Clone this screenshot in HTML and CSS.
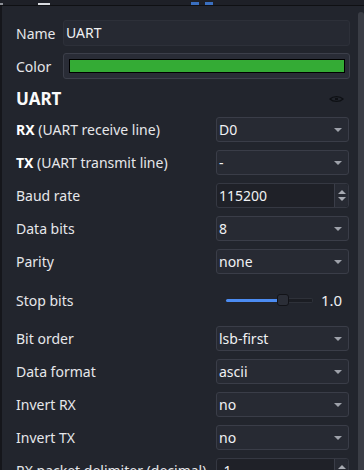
FILE: index.html
```html
<!DOCTYPE html>
<html lang="en">
<head>
  <meta charset="UTF-8" />
  <title>UART properties</title>
  <link rel="stylesheet" href="styles.css">
</head>
<body>

  <div class="topbar">
    <span class="mark mark-corner"></span>
    <span class="mark mark-white"></span>
    <span class="mark mark-blue"></span>
    <span class="mark mark-blue second"></span>
  </div>

  <div class="main">
    <div class="panel">

      <div class="field-row">
        <label class="label short">Name</label>
        <div class="textbox">UART</div>
      </div>

      <div class="field-row">
        <label class="label short">Color</label>
        <div class="colorbox"><div class="swatch"></div></div>
      </div>

      <div class="section-head">
        <span class="section-title">UART</span>
        <svg class="eye" width="15" height="8" viewBox="0 0 15 8">
          <path d="M1 4 C4 0.8 11 0.8 14 4 C11 7.2 4 7.2 1 4 Z" fill="none" stroke="#0e1014" stroke-width="1.3"/>
          <rect x="6" y="3" width="3" height="2" fill="#0e1014"/>
        </svg>
      </div>

      <div class="row">
        <label class="label"><b>RX</b> (UART receive line)</label>
        <div class="select">D0</div>
      </div>

      <div class="row">
        <label class="label"><b>TX</b> (UART transmit line)</label>
        <div class="select">-</div>
      </div>

      <div class="row">
        <label class="label">Baud rate</label>
        <div class="spinbox">
          <span class="spin-value">115200</span>
          <span class="spin-buttons"><i class="up"></i><i class="down"></i></span>
        </div>
      </div>

      <div class="row">
        <label class="label">Data bits</label>
        <div class="select">8</div>
      </div>

      <div class="row">
        <label class="label">Parity</label>
        <div class="select">none</div>
      </div>

      <div class="row slider-row">
        <label class="label">Stop bits</label>
        <div class="slider-wrap">
          <div class="slider">
            <div class="slider-fill"></div>
            <div class="slider-handle"></div>
            <div class="slider-rest"></div>
          </div>
          <span class="slider-value">1.0</span>
        </div>
      </div>

      <div class="row">
        <label class="label">Bit order</label>
        <div class="select">lsb-first</div>
      </div>

      <div class="row">
        <label class="label">Data format</label>
        <div class="select">ascii</div>
      </div>

      <div class="row">
        <label class="label">Invert RX</label>
        <div class="select">no</div>
      </div>

      <div class="row">
        <label class="label">Invert TX</label>
        <div class="select">no</div>
      </div>

      <div class="row">
        <label class="label">RX packet delimiter (decimal)</label>
        <div class="spinbox">
          <span class="spin-value">-1</span>
          <span class="spin-buttons"><i class="up"></i><i class="down"></i></span>
        </div>
      </div>

    </div>
    <div class="scrollbar"></div>
  </div>

</body>
</html>
```

FILE: styles.css
```css
html, body {
  height: 100%;
  overflow: hidden;
}
body {
  margin: 0;
  background: #22252d;
  font-family: "Noto Sans", "DejaVu Sans", sans-serif;
  font-size: 14px;
  color: #e8e9ec;
}

/* strip of the window above the panel */
.topbar {
  height: 5px;
  background: #1e2027;
  border-bottom: 1px solid #0f1013;
  display: flex;
  align-items: flex-end;
}
.mark {
  height: 2px;
}
.mark-corner {
  width: 3px;
  background: #8c8f96;
}
.mark-white {
  width: 12px;
  background: #d8dadf;
  margin-left: 35px;
}
.mark-blue {
  width: 8px;
  height: 3px;
  background: #3a6fc0;
  margin-left: 141px;
}
.mark-blue.second {
  margin-left: 6px;
}

.main {
  display: flex;
  height: calc(100% - 6px);
}
.panel {
  flex: 1;
  border-left: 2px solid #15161b;
  padding: 14px 8px 0 14px;
  display: flex;
  flex-direction: column;
  gap: 8px;
  overflow: hidden;
}
.panel > * {
  flex: none;
}
.scrollbar {
  width: 6px;
  margin-top: 6px;
  background: #3a3d45;
  border-radius: 3px 3px 0 0;
}

/* Name / Color */
.field-row {
  display: flex;
  align-items: center;
  height: 26px;
}
.field-row + .field-row {
  margin-top: -1px;
}
.label.short {
  width: 47px;
  flex: none;
}
.textbox {
  flex: 1;
  height: 24px;
  line-height: 24px;
  padding-left: 2px;
  background: #262932;
  border: 1px solid #2d3039;
  border-radius: 3px;
  color: #f0f1f3;
}
.colorbox {
  flex: 1;
  height: 24px;
  background: #292c36;
  border: 1px solid #3c3f4a;
  border-radius: 3px;
  display: flex;
  align-items: center;
  padding: 0 4px 0 5px;
}
.swatch {
  flex: 1;
  height: 12px;
  background: #34ab35;
  border: 1px solid #000;
}

/* heading */
.section-head {
  display: flex;
  align-items: center;
  justify-content: space-between;
  height: 22px;
  padding-right: 6px;
}
.section-title {
  font-weight: bold;
  font-size: 17px;
  color: #fafafa;
}
.eye {
  margin-top: 2px;
}

/* property rows */
.row {
  display: grid;
  grid-template-columns: 200px 133px;
  align-items: center;
  height: 25px;
}
.label {
  white-space: nowrap;
  color: #e6e7ea;
}
.label b {
  color: #fff;
}
.select {
  position: relative;
  height: 23px;
  line-height: 23px;
  padding-left: 2px;
  background: #272a33;
  border: 1px solid #3a3d48;
  border-radius: 3px;
  color: #f0f1f3;
}
.select::after {
  content: "";
  position: absolute;
  right: 6px;
  top: 10px;
  border-left: 4px solid transparent;
  border-right: 4px solid transparent;
  border-top: 4px solid #9ea1aa;
}

.spinbox {
  display: flex;
  height: 23px;
  background: #1f2128;
  border: 1px solid #353842;
  border-radius: 3px;
}
.spin-value {
  flex: 1;
  line-height: 23px;
  padding-left: 2px;
  color: #f0f1f3;
}
.spin-buttons {
  width: 13px;
  border-left: 1px solid #3a3d48;
  background: #272a33;
  border-radius: 0 3px 3px 0;
  display: flex;
  flex-direction: column;
  align-items: center;
  justify-content: center;
  gap: 3px;
}
.spin-buttons .up {
  border-left: 4px solid transparent;
  border-right: 4px solid transparent;
  border-bottom: 4px solid #a7aab2;
}
.spin-buttons .down {
  border-left: 4px solid transparent;
  border-right: 4px solid transparent;
  border-top: 4px solid #a7aab2;
}

/* slider */
.row.slider-row {
  height: 36px;
}
.slider-wrap {
  display: flex;
  align-items: center;
  padding-left: 10px;
  gap: 8px;
}
.slider {
  width: 87px;
  display: flex;
  align-items: center;
}
.slider-fill {
  width: 51px;
  height: 3px;
  background: #4c8cf2;
  border-radius: 2px 0 0 2px;
}
.slider-handle {
  width: 10px;
  height: 10px;
  background: #2b2e37;
  border: 1px solid #121318;
  border-radius: 3px;
}
.slider-rest {
  flex: 1;
  height: 3px;
  background: #1b1d23;
  border: 1px solid #2e3139;
  border-left: none;
  border-radius: 0 2px 2px 0;
}
.slider-value {
  font-size: 15px;
  color: #eeeff2;
}
```
